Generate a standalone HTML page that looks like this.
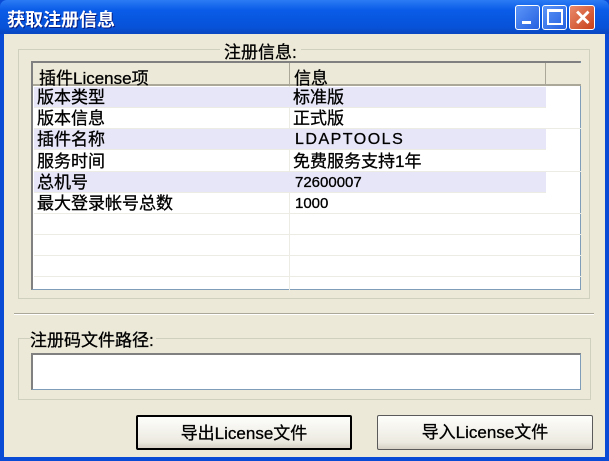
<!DOCTYPE html><html><head><style>
*{margin:0;padding:0;box-sizing:border-box}
body{width:609px;height:461px;background:#0A4BD6;font-family:"Liberation Sans","Noto Sans CJK SC",sans-serif;font-size:17px;position:relative;overflow:hidden}
.abs{position:absolute}
#title{left:0;top:0;width:609px;height:34px;background:linear-gradient(#2C7BF5,#0A5CE8 30%,#0752D8 80%,#0A46C0);border-radius:7px 7px 0 0}
#body{left:4px;top:34px;width:601px;height:423px;background:#ECE9D8}
.btnw{width:25px;height:25px;top:5px;border:1px solid #fff;border-radius:3px;background:linear-gradient(135deg,#5B95F8,#2560E0)}
.row{position:absolute;left:1px;width:548px;height:21px;border-bottom:1px solid #ECEBE4}
.row span{position:absolute;top:0px;font-size:17px;line-height:21px;color:#000;-webkit-text-stroke:0.3px #000}
.btn{position:absolute;height:35px;border:1px solid #003C74;border-radius:2px;background:linear-gradient(#FDFDFB,#ECEAE0 80%,#D6D0C5);text-align:center;line-height:33px;font-size:17px;-webkit-text-stroke:0.3px #000}
.t{-webkit-text-stroke:0.3px #000}
</style></head><body>
<div id="title" class="abs"><span class="abs" style="left:7px;top:6px;color:#fff;font-size:18px;font-weight:bold;text-shadow:1px 1px #0A1E80">获取注册信息</span>
<div class="abs btnw" style="left:515px"><div class="abs" style="left:6px;top:15px;width:9px;height:3px;background:#fff"></div></div>
<div class="abs btnw" style="left:542px"><div class="abs" style="left:4px;top:3px;width:16px;height:16px;border:2px solid #fff;border-top-width:3px"></div></div>
<div class="abs btnw" style="left:569px;width:26px;background:linear-gradient(135deg,#E98A6B,#C8401A)"><span class="abs" style="left:4px;top:0px;color:#fff;font-size:21px;font-weight:bold">✕</span></div>
</div>
<div id="body" class="abs"></div>
<div class="abs" style="left:18px;top:49px;width:572px;height:250px;border:1px solid #D0D0BF;"></div>
<span class="abs t" style="left:220px;top:38px;background:#ECE9D8;padding:0 4px">注册信息:</span>
<div class="abs" style="left:31px;top:61px;width:550px;height:229px;border:1px solid #7F9DB9;background:#fff;border-left:2px solid #808080;border-top:2px solid #808080">
 <div class="abs" style="left:0;top:0;width:548px;height:23px;background:#ECE9D8;border-bottom:2px solid #ACA899"></div>
 <div class="abs" style="left:256px;top:0;width:1px;height:23px;background:#ACA899"></div>
 <div class="abs" style="left:512px;top:0;width:1px;height:23px;background:#ACA899"></div>
 <span class="abs t" style="left:6px;top:1px">插件License项</span><span class="abs t" style="left:261px;top:1px">信息</span>
 <div class="abs" style="left:256px;top:23px;width:1px;height:206px;background:#ECEBE4"></div>
 <div class="row" style="top:24px;background:#E6E6F8;width:512px"><span style="left:3px">版本类型</span><span style="left:259px">标准版</span></div>
 <div class="row" style="top:45px"><span style="left:3px">版本信息</span><span style="left:259px">正式版</span></div>
 <div class="row" style="top:66px;background:#E6E6F8;width:512px"><span style="left:3px">插件名称</span><span style="left:261px;letter-spacing:1.5px;font-size:16px">LDAPTOOLS</span></div>
 <div class="row" style="top:88px"><span style="left:3px">服务时间</span><span style="left:259px">免费服务支持1年</span></div>
 <div class="row" style="top:109px;background:#E6E6F8;width:512px"><span style="left:3px">总机号</span><span style="left:261px;font-size:15px">72600007</span></div>
 <div class="row" style="top:130px"><span style="left:3px">最大登录帐号总数</span><span style="left:261px;font-size:15px">1000</span></div>
 <div class="row" style="top:151px"></div><div class="row" style="top:172px"></div><div class="row" style="top:193px"></div>
</div>
<div class="abs" style="left:14px;top:313px;width:580px;height:2px;border-top:1px solid #ACA899;border-bottom:1px solid #fff"></div>
<div class="abs" style="left:18px;top:338px;width:573px;height:62px;border:1px solid #D0D0BF"></div>
<span class="abs t" style="left:30px;top:326px;background:#ECE9D8;padding-right:2px">注册码文件路径:</span>
<div class="abs" style="left:31px;top:353px;width:550px;height:37px;background:#fff;border:1px solid #7F9DB9;border-left:2px solid #808080;border-top:2px solid #808080"></div>
<div class="btn" style="left:136px;top:415px;width:216px;border:2px solid #000">导出License文件</div>
<div class="btn" style="left:377px;top:415px;width:216px;border-color:#5a5a5a">导入License文件</div>
</body></html>
